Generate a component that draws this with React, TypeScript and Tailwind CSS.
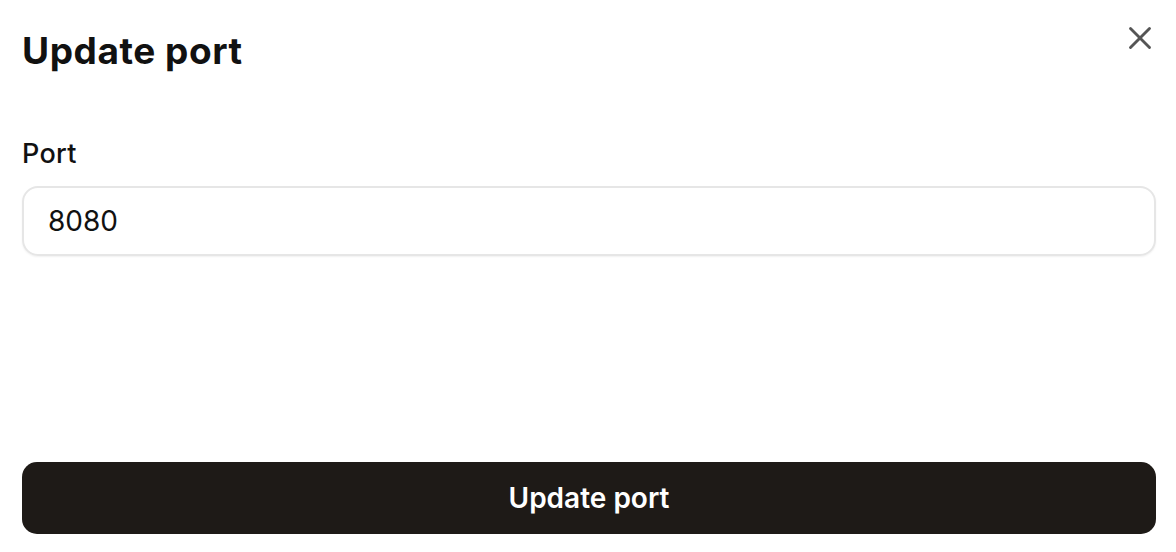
import { X } from "lucide-react"

export default function App() {
  return (
    <div
      className="h-[552px] w-full bg-white flex flex-col pl-[22px] pr-[20px] pb-[18px]"
      style={{ fontFamily: "Inter, 'Noto Sans', sans-serif" }}
    >
      <div className="flex items-start justify-between pt-[28px]">
        <h1 className="text-[37px] leading-[46px] font-bold tracking-[0.015em] text-[#111]">Update port</h1>
        <button className="mt-[-9px] mr-[-3px] text-[#555]">
          <X size={38} strokeWidth={1.8} />
        </button>
      </div>

      <label className="mt-[63px] text-[27px] leading-[34px] font-medium tracking-[0.01em] text-[#111]">Port</label>
      <div className="mt-[15px] h-[70px] rounded-[16px] border-2 border-[#e6e6e6] shadow-[0_1px_2px_rgba(0,0,0,0.06)] flex items-center px-[24px]">
        <input
          defaultValue="8080"
          className="w-full outline-none bg-transparent text-[28px] text-[#111]"
        />
      </div>

      <button className="mt-auto h-[72px] w-full rounded-[15px] bg-[#1e1a17] text-white text-[28px] font-semibold">
        Update port
      </button>
    </div>
  )
}
